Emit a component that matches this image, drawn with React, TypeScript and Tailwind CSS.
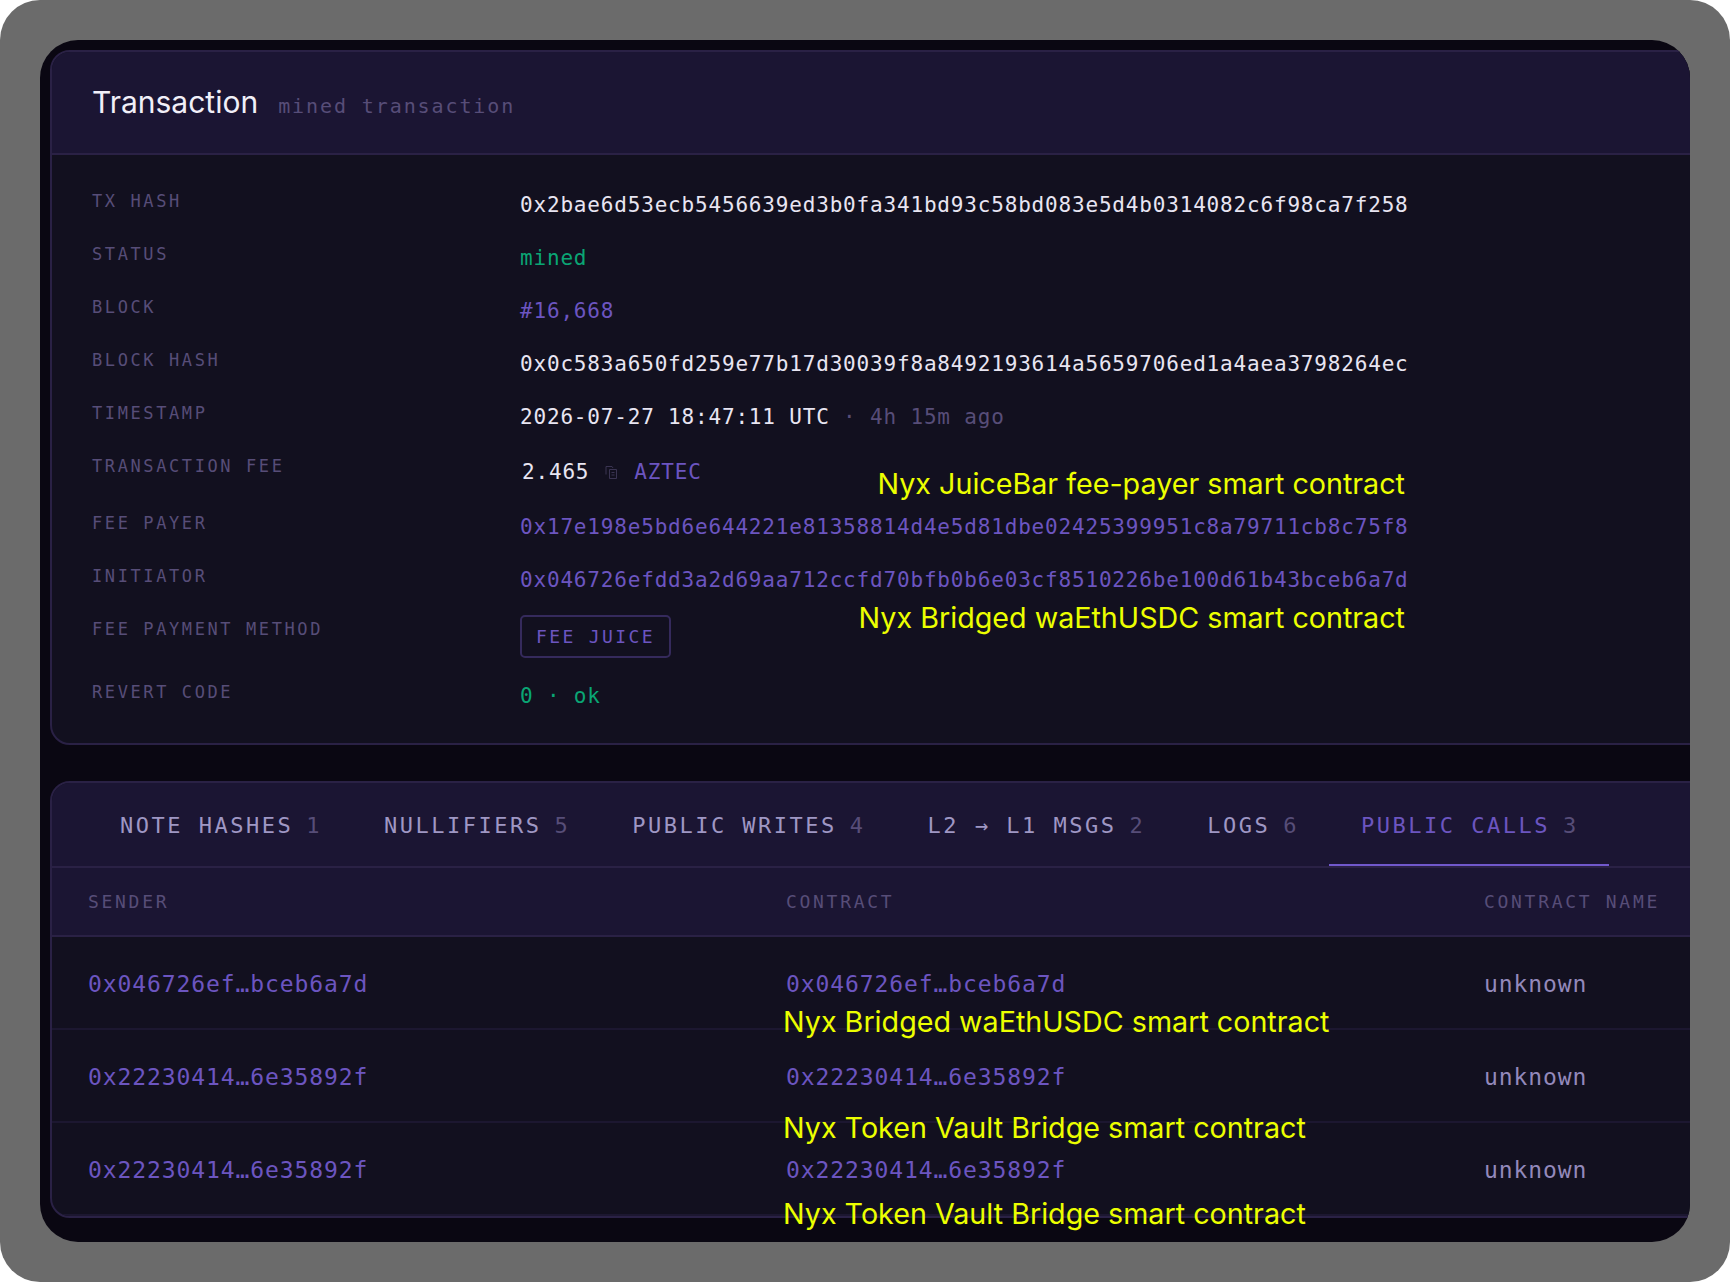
const mono = "font-['DejaVu_Sans_Mono',monospace]";

function DetailRow({ label, children, rowClass = 'h-[53px]' }: { label: string; children: React.ReactNode; rowClass?: string }) {
  return (
    <div className={`flex ${rowClass}`}>
      <div className={`w-[428px] shrink-0 pt-[2px] text-[17px] leading-[24px] tracking-[2.6px] text-[#574d78] ${mono}`}>{label}</div>
      <div className={`pt-[5px] text-[21px] leading-[26px] tracking-[0.82px] ${mono}`}>{children}</div>
    </div>
  );
}

function FileCopy() {
  return (
    <svg width="13" height="14" viewBox="0 0 13 14" fill="none" stroke="#3a3452" strokeWidth="1" className="inline-block">
      <path d="M1 9.5V1.5h6l1 1.5" />
      <path d="M4.5 4.5h7v9h-7z" />
      <path d="M6.5 7.5h3M6.5 10h3" />
    </svg>
  );
}

const tabs = [
  ['NOTE HASHES', '1'],
  ['NULLIFIERS', '5'],
  ['PUBLIC WRITES', '4'],
  ['L2 → L1 MSGS', '2'],
  ['LOGS', '6'],
];

const rows = [
  ['0x046726ef…bceb6a7d', '0x046726ef…bceb6a7d'],
  ['0x22230414…6e35892f', '0x22230414…6e35892f'],
  ['0x22230414…6e35892f', '0x22230414…6e35892f'],
];

const notes = [
  { text: 'Nyx JuiceBar fee-payer smart contract', box: 'right-[325px] top-[466px]' },
  { text: 'Nyx Bridged waEthUSDC smart contract', box: 'right-[325px] top-[600px]' },
  { text: 'Nyx Bridged waEthUSDC smart contract', box: 'left-[783px] top-[1004px]' },
  { text: 'Nyx Token Vault Bridge smart contract', box: 'left-[783px] top-[1110px]' },
  { text: 'Nyx Token Vault Bridge smart contract', box: 'left-[783px] top-[1196px]' },
];

export default function App() {
  return (
    <div className="relative h-[1282px] w-[1730px] overflow-hidden bg-white">
      <div className="h-full w-full rounded-[40px] bg-[#6b6b6b] p-10">
        <div className="h-full w-full overflow-hidden rounded-[38px] bg-[#0a0712] pl-[10px] pt-[10px]">
          <section className="mr-[-30px] h-[695px] overflow-hidden rounded-[20px] border-2 border-[#2a2145] bg-[#12101f]">
            <header className="flex h-[103px] items-baseline gap-5 border-b-2 border-[#2a2145] bg-[#1b1533] pl-[40px] pt-[32px]">
              <h1 className="font-['Inter',sans-serif] text-[30px] leading-[36px] font-normal text-[#f1eff8]">Transaction</h1>
              <span className={`text-[20px] tracking-[1.9px] text-[#574d78] ${mono}`}>mined transaction</span>
            </header>
            <div className="pl-[40px] pt-[32px]">
              <DetailRow label="TX HASH"><span className="text-[#e8e5f2]">0x2bae6d53ecb5456639ed3b0fa341bd93c58bd083e5d4b0314082c6f98ca7f258</span></DetailRow>
              <DetailRow label="STATUS"><span className="text-[#0aa574]">mined</span></DetailRow>
              <DetailRow label="BLOCK"><span className="text-[#6c55c0]">#16,668</span></DetailRow>
              <DetailRow label="BLOCK HASH"><span className="text-[#e8e5f2]">0x0c583a650fd259e77b17d30039f8a8492193614a5659706ed1a4aea3798264ec</span></DetailRow>
              <DetailRow label="TIMESTAMP"><span className="text-[#e8e5f2]">2026-07-27 18:47:11 UTC</span><span className="text-[#574d78]"> · 4h 15m ago</span></DetailRow>
              <DetailRow label="TRANSACTION FEE" rowClass="h-[57px]">
                <span className="flex items-center gap-[16px] pt-[2px]">
                  <span className="ml-[2px] text-[#e8e5f2]">2.465</span>
                  <FileCopy />
                  <span className="text-[#6c55c0]">AZTEC</span>
                </span>
              </DetailRow>
              <DetailRow label="FEE PAYER"><span className="text-[#6c55c0]">0x17e198e5bd6e644221e81358814d4e5d81dbe02425399951c8a79711cb8c75f8</span></DetailRow>
              <DetailRow label="INITIATOR"><span className="text-[#6c55c0]">0x046726efdd3a2d69aa712ccfd70bfb0b6e03cf8510226be100d61b43bceb6a7d</span></DetailRow>
              <div className="flex h-[63px]">
                <div className={`w-[428px] shrink-0 pt-[2px] text-[17px] leading-[24px] tracking-[2.6px] text-[#574d78] ${mono}`}>FEE PAYMENT METHOD</div>
                <span className={`h-[43px] w-[151px] rounded-[5px] border-2 border-[#352a5c] text-center text-[18px] leading-[40px] tracking-[2.4px] text-[#6c55c0] ${mono}`}>FEE JUICE</span>
              </div>
              <DetailRow label="REVERT CODE"><span className="text-[#0aa574]">0 · ok</span></DetailRow>
            </div>
          </section>

          <section className="mr-[-30px] mt-[36px] h-[437px] overflow-hidden rounded-[20px] border-2 border-[#2a2145] bg-[#12101f]">
            <nav className="flex h-[85px] border-b-2 border-[#2a2145] bg-[#1b1533] pl-[36px]">
              {tabs.map(([name, count]) => (
                <div key={name} className={`flex h-full items-center gap-[13px] pl-[32px] pr-[30px] pt-[2px] text-[22px] tracking-[2.5px] text-[#9f97c4] ${mono}`}>
                  <span>{name}</span>
                  <span className="text-[#574d78]">{count}</span>
                </div>
              ))}
              <div className={`flex h-[83px] items-center gap-[13px] border-b-2 border-[#7158cc] pl-[32px] pr-[30px] pt-[4px] text-[22px] tracking-[2.5px] text-[#6c55c0] ${mono}`}>
                <span>PUBLIC CALLS</span>
                <span className="text-[#574d78]">3</span>
              </div>
            </nav>
            <div className={`flex h-[69px] items-center border-b-2 border-[#2a2145] bg-[#1b1533] pl-[36px] text-[18px] tracking-[2.7px] text-[#574d78] ${mono}`}>
              <span className="w-[698px]">SENDER</span>
              <span className="w-[698px]">CONTRACT</span>
              <span>CONTRACT NAME</span>
            </div>
            {rows.map(([sender, contract], i) => (
              <div key={i} className={`flex h-[93px] items-center border-b-2 border-[#1c1730] pl-[36px] pt-[4px] text-[23px] tracking-[0.9px] ${mono}`}>
                <span className="w-[698px] text-[#6c55c0]">{sender}</span>
                <span className="w-[698px] text-[#6c55c0]">{contract}</span>
                <span className="text-[#9389bb]">unknown</span>
              </div>
            ))}
          </section>
        </div>
      </div>
      {notes.map((n, i) => (
        <span key={i} className={`absolute ${n.box} font-['Inter',sans-serif] text-[28.7px] leading-[36px] whitespace-nowrap text-[#ecff00]`}>{n.text}</span>
      ))}
    </div>
  );
}
